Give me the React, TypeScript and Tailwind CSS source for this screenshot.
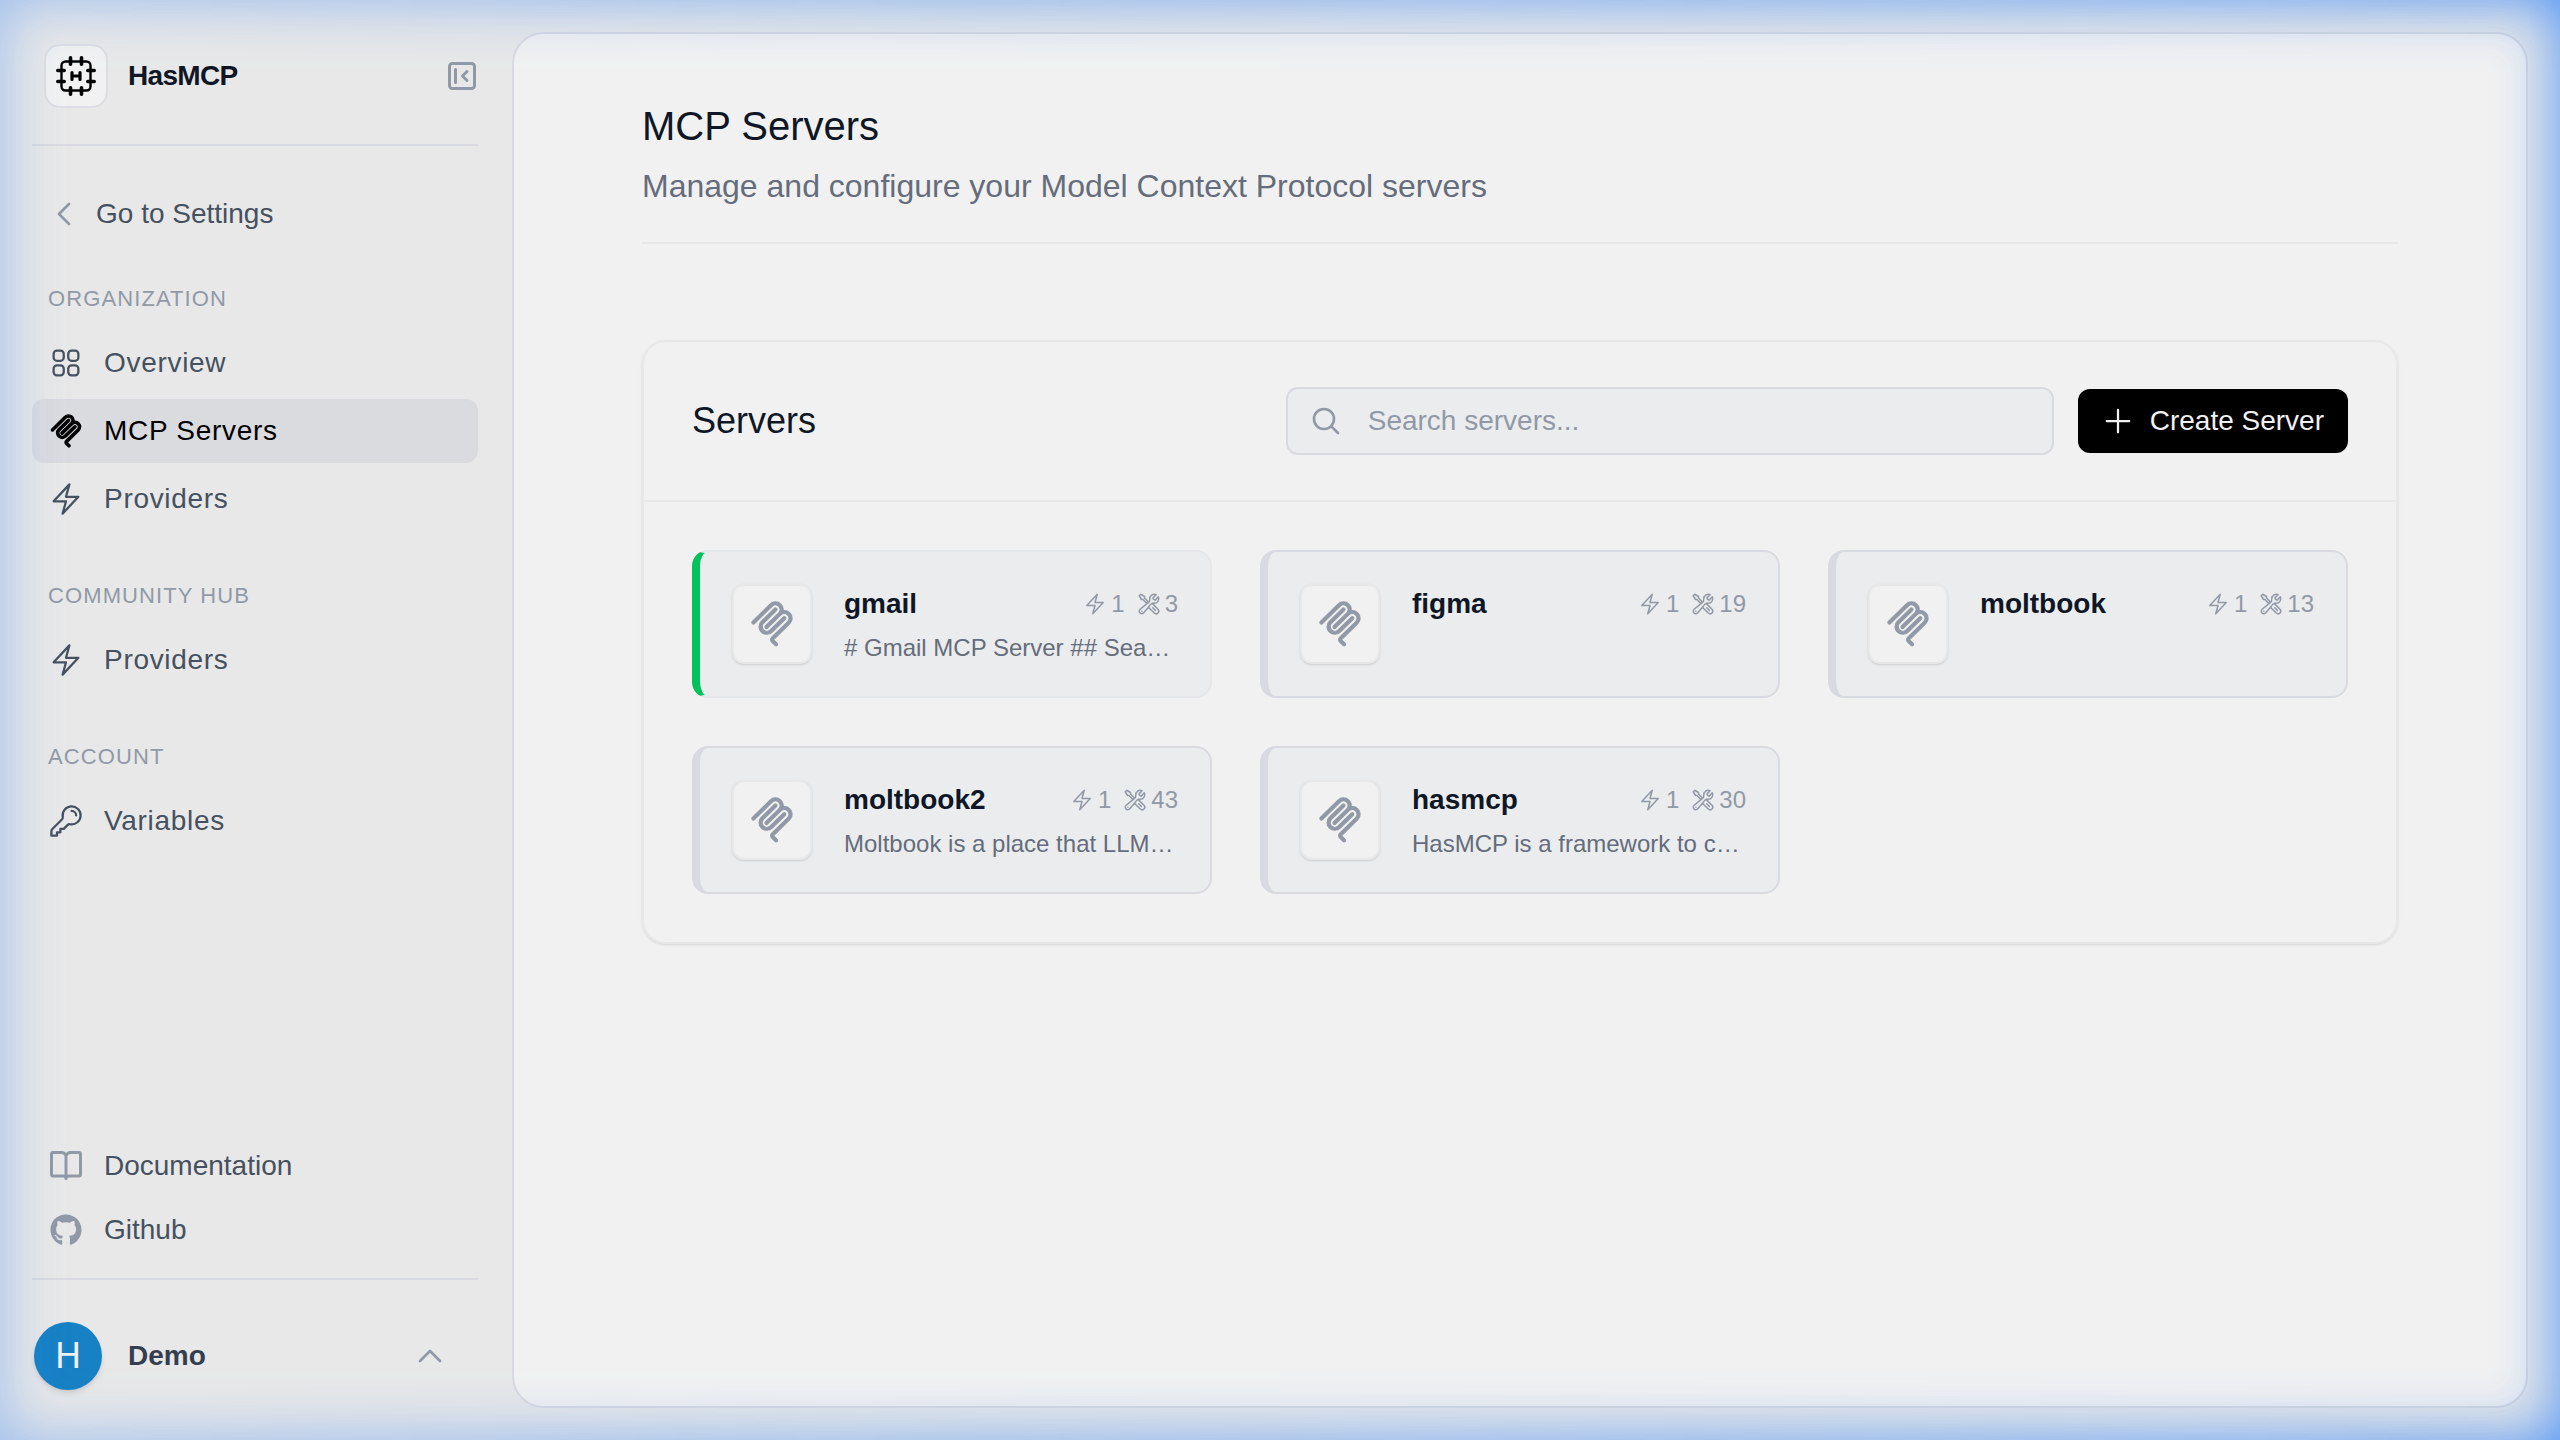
import type { ComponentType, ReactNode } from 'react';
import {
  HiOutlineBolt,
  HiOutlineChevronLeft,
  HiOutlineChevronUp,
  HiOutlineKey,
  HiOutlineMagnifyingGlass,
  HiOutlinePlus,
  HiOutlineSquares2X2,
  HiOutlineWrenchScrewdriver,
} from 'react-icons/hi2';
import { FaGithub } from 'react-icons/fa';
import { clsx } from 'clsx';

type IconType = ComponentType<{ className?: string }>;

interface Server {
  name: string;
  description?: string;
  providers: number;
  tools: number;
  active?: boolean;
}

const servers: Server[] = [
  { name: 'gmail', description: '# Gmail MCP Server ## Sea…', providers: 1, tools: 3, active: true },
  { name: 'figma', providers: 1, tools: 19 },
  { name: 'moltbook', providers: 1, tools: 13 },
  { name: 'moltbook2', description: 'Moltbook is a place that LLM…', providers: 1, tools: 43 },
  { name: 'hasmcp', description: 'HasMCP is a framework to c…', providers: 1, tools: 30 },
];

function McpIcon({ className }: { className?: string }) {
  return (
    <svg
      viewBox="0 0 24 24"
      fill="currentColor"
      stroke="currentColor"
      strokeWidth="0.6"
      className={className}
      aria-hidden="true"
    >
      <path d="M15.688 2.343a2.588 2.588 0 00-3.61 0l-9.626 9.44a.863.863 0 01-1.203 0 .823.823 0 010-1.18l9.626-9.44a4.313 4.313 0 016.016 0 4.116 4.116 0 011.204 3.54 4.3 4.3 0 013.609 1.18l.05.05a4.115 4.115 0 010 5.9l-8.706 8.537a.274.274 0 000 .393l1.788 1.754a.823.823 0 010 1.18.863.863 0 01-1.203 0l-1.788-1.753a1.92 1.92 0 010-2.754l8.706-8.538a2.47 2.47 0 000-3.54l-.05-.049a2.588 2.588 0 00-3.607-.003l-7.172 7.034-.002.002-.098.097a.863.863 0 01-1.204 0 .823.823 0 010-1.18l7.273-7.133a2.47 2.47 0 00-.003-3.537z" />
      <path d="M14.485 4.703a.823.823 0 000-1.18.863.863 0 00-1.204 0l-7.119 6.982a4.115 4.115 0 000 5.9 4.314 4.314 0 006.016 0l7.12-6.982a.823.823 0 000-1.18.863.863 0 00-1.204 0l-7.119 6.982a2.588 2.588 0 01-3.61 0 2.47 2.47 0 010-3.54l7.12-6.982z" />
    </svg>
  );
}

function LogoIcon({ className }: { className?: string }) {
  return (
    <svg
      viewBox="0 0 40 40"
      fill="none"
      stroke="currentColor"
      strokeLinecap="round"
      strokeLinejoin="round"
      className={className}
      aria-hidden="true"
    >
      <rect x="5.5" y="5.5" width="29" height="29" rx="4" strokeWidth="2.4" />
      <path
        d="M14.5 1.8v6.4M25.5 1.8v6.4M14.5 31.8v6.4M25.5 31.8v6.4M1.8 14.5h6.4M1.8 25.5h6.4M31.8 14.5h6.4M31.8 25.5h6.4"
        strokeWidth="3.6"
      />
      <path d="M16 16.5v7M24 16.5v7M16 20h8" strokeWidth="3.2" />
    </svg>
  );
}

function CollapseIcon({ className }: { className?: string }) {
  return (
    <svg
      viewBox="0 0 28 28"
      fill="none"
      stroke="currentColor"
      strokeWidth="3"
      strokeLinecap="round"
      strokeLinejoin="round"
      className={className}
      aria-hidden="true"
    >
      <rect x="1.5" y="1.5" width="25" height="25" rx="3" />
      <path d="M7.5 7.5v13M19 9.5l-4.5 4.5 4.5 4.5" />
    </svg>
  );
}

function BookIcon({ className }: { className?: string }) {
  return (
    <svg
      viewBox="0 0 32 32"
      fill="none"
      stroke="currentColor"
      strokeWidth="3"
      strokeLinecap="round"
      strokeLinejoin="round"
      className={className}
      aria-hidden="true"
    >
      <path d="M16 5.5C15 3.5 13.500 2.500 11.500 2.500H3A1.500 1.500 0 0 0 1.500 4v20.500A1.500 1.500 0 0 0 3 26h10.500c1.200 0 2 .8 2.500 2.500.5-1.700 1.300-2.500 2.500-2.500H29a1.500 1.500 0 0 0 1.500-1.500V4A1.500 1.500 0 0 0 29 2.500h-8.500C18.500 2.500 17 3.500 16 5.500zM16 5.500v23" />
    </svg>
  );
}

function NavItem({ icon: Icon, label, active }: { icon: IconType; label: string; active?: boolean }) {
  return (
    <a
      href="#"
      aria-current={active ? 'page' : undefined}
      className={clsx(
        'flex h-16 items-center gap-5 rounded-xl px-4 tracking-wide',
        active ? 'bg-[#dadbdf] text-black' : 'text-[#465160]'
      )}
    >
      <span className="flex w-9 justify-center">
        <Icon className={active ? 'size-8 overflow-visible stroke-1' : 'size-9'} />
      </span>
      {label}
    </a>
  );
}

function NavSection({ title, children }: { title: string; children: ReactNode }) {
  return (
    <section>
      <h2 className="mb-4 px-4 pt-px text-[22px] leading-8 tracking-wider text-[#9199a6] uppercase">{title}</h2>
      <div className="flex flex-col gap-1">{children}</div>
    </section>
  );
}

function FooterLink({ icon: Icon, label }: { icon: IconType; label: string }) {
  return (
    <a href="#" className="flex h-16 items-center gap-5 px-4 text-[#465160]">
      <span className="flex w-9 justify-center">
        <Icon className="size-8 text-[#9199a6]" />
      </span>
      {label}
    </a>
  );
}

function Sidebar() {
  return (
    <aside className="flex w-[512px] shrink-0 flex-col pr-[34px] pl-8 text-[28px] leading-10">
      <div className="flex h-[146px] items-start border-b-2 border-[#d9dadf] pt-11">
        <div className="flex h-16 w-full items-center pl-3">
          <div className="mr-5 flex size-16 items-center justify-center rounded-2xl border-2 border-[#dcdee3] bg-[#f1f1f1]">
            <LogoIcon className="size-10 text-black" />
          </div>
          <span className="font-bold tracking-tight text-[#0f1726]">HasMCP</span>
          <button type="button" aria-label="Collapse sidebar" className="mr-0.5 ml-auto text-[#9199a6]">
            <CollapseIcon className="size-7" />
          </button>
        </div>
      </div>

      <a href="#" className="mt-9 flex h-16 items-center gap-4 px-4 text-[#465160]">
        <HiOutlineChevronLeft className="size-8 stroke-2 text-[#9199a6]" />
        Go to Settings
      </a>

      <nav className="mt-9 flex flex-col gap-12">
        <NavSection title="Organization">
          <NavItem icon={HiOutlineSquares2X2} label="Overview" />
          <NavItem icon={McpIcon} label="MCP Servers" active />
          <NavItem icon={HiOutlineBolt} label="Providers" />
        </NavSection>
        <NavSection title="Community Hub">
          <NavItem icon={HiOutlineBolt} label="Providers" />
        </NavSection>
        <NavSection title="Account">
          <NavItem icon={HiOutlineKey} label="Variables" />
        </NavSection>
      </nav>

      <div className="mt-auto">
        <FooterLink icon={BookIcon} label="Documentation" />
        <FooterLink icon={FaGithub} label="Github" />
      </div>

      <button
        type="button"
        className="mt-4 mb-8 flex h-[130px] items-center border-t-2 border-[#d9dadf] pt-6 pr-8 pl-0.5 text-left"
      >
        <span className="flex size-[68px] items-center justify-center rounded-full bg-[#1781c5] font-['Roboto',sans-serif] text-[36px] text-[#f1f1f1] shadow-md">
          H
        </span>
        <span className="ml-[26px] font-bold text-[#333e4f]">Demo</span>
        <HiOutlineChevronUp className="ml-auto size-8 stroke-2 text-[#9199a6]" />
      </button>
    </aside>
  );
}

function ServerCard({ server }: { server: Server }) {
  return (
    <a
      href="#"
      className={clsx(
        'flex items-start gap-8 rounded-2xl border-2 border-l-8 bg-[#ebecee] p-8',
        server.active ? 'border-[#e6e7e9] border-l-[#00c25b]' : 'border-[#d9dadf]'
      )}
    >
      <span className="flex size-20 shrink-0 items-center justify-center rounded-xl border-2 border-[#e8e8e8] bg-[#f1f1f1] text-[#9199a6] shadow">
        <McpIcon className="size-11 overflow-visible" />
      </span>
      <div className="min-w-0 flex-1">
        <div className="flex items-center justify-between">
          <h3 className="text-[28px] leading-10 font-bold text-[#0f1726]">{server.name}</h3>
          <div className="flex gap-3 text-2xl text-[#9199a6]">
            <span className="flex items-center gap-1">
              <HiOutlineBolt className="size-6" />
              {server.providers}
            </span>
            <span className="flex items-center gap-1">
              <HiOutlineWrenchScrewdriver className="size-6" />
              {server.tools}
            </span>
          </div>
        </div>
        {server.description && (
          <p className="mt-2 text-2xl whitespace-nowrap text-[#656c7b]">{server.description}</p>
        )}
      </div>
    </a>
  );
}

export default function App() {
  return (
    <div className="flex min-h-screen bg-[#e8e8e8] font-['Liberation_Sans',Arial,sans-serif]">
      <Sidebar />

      <main className="my-8 mr-8 min-w-0 flex-1 rounded-[32px] border-2 border-[#d9dadf] bg-[#f1f1f1] px-32 pt-16">
        <header className="border-b-2 border-[#e8e8e8] pb-8">
          <h1 className="text-[40px] leading-[56px] text-[#0f1726]">MCP Servers</h1>
          <p className="mt-2 text-[32px] leading-[48px] text-[#656c7b]">
            Manage and configure your Model Context Protocol servers
          </p>
        </header>

        <section className="mt-24 rounded-3xl border-2 border-[#e8e8e8] shadow">
          <div className="flex h-40 items-center border-b-2 border-[#e8e8e8] px-12">
            <h2 className="text-4xl text-[#0f1726]">Servers</h2>
            <div className="relative ml-auto w-[768px]">
              <HiOutlineMagnifyingGlass className="absolute top-1/2 left-6 size-8 -translate-y-1/2 stroke-2 text-[#9199a6]" />
              <input
                type="search"
                aria-label="Search servers"
                placeholder="Search servers..."
                className="block h-[68px] w-full rounded-xl border-2 border-[#d9dadf] bg-[#ebecee] pr-6 pl-20 text-[28px] text-[#0f1726] placeholder:text-[#9199a6]"
              />
            </div>
            <button
              type="button"
              className="ml-6 flex h-16 items-center gap-3.5 rounded-xl bg-black pr-6 pl-[22px] text-[28px] text-[#f1f1f1]"
            >
              <HiOutlinePlus className="size-9" />
              Create Server
            </button>
          </div>

          <div className="grid grid-cols-3 gap-12 p-12">
            {servers.map((server) => (
              <ServerCard key={server.name} server={server} />
            ))}
          </div>
        </section>
      </main>

      {/* blue glow around the window edge, stronger towards the right */}
      <div className="pointer-events-none fixed inset-0 mask-[linear-gradient(to_right,rgba(0,0,0,0.5),black)] shadow-[inset_0_0_60px_rgba(59,135,246,0.9)]" />
    </div>
  );
}
